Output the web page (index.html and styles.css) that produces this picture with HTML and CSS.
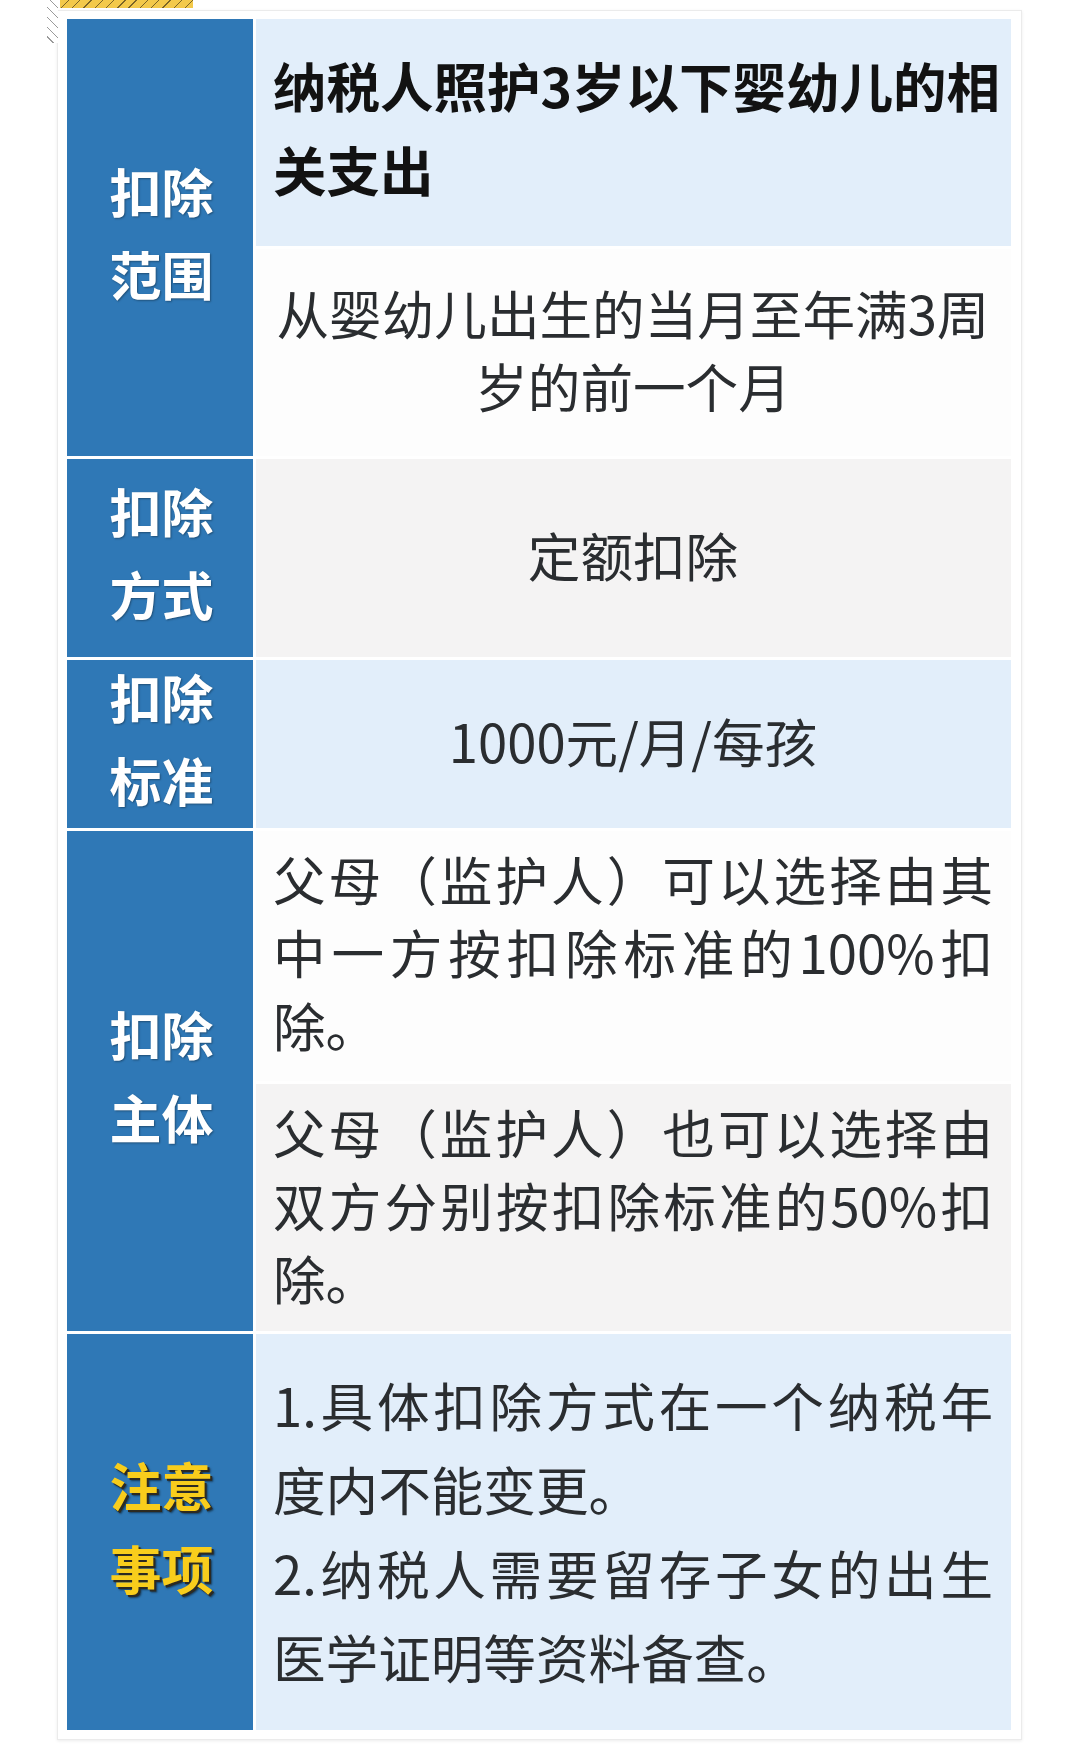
FILE: index.html
```html
<!DOCTYPE html>
<html lang="zh-CN">
<head>
<meta charset="utf-8">
<title>3岁以下婴幼儿照护专项附加扣除</title>
<link rel="stylesheet" href="styles.css">
</head>
<body>
<div class="page">
  <div class="deco-hatch"></div>
  <div class="deco-tape"></div>
  <div class="card">
    <div class="table">
      <div class="label"><span>扣除</span><span>范围</span></div>
      <div class="cell split">
        <div class="sub blue title">纳税人照护3岁以下婴幼儿的相关支出</div>
        <div class="sub white center-text">从婴幼儿出生的当月至年满3周岁的前一个月</div>
      </div>

      <div class="label"><span>扣除</span><span>方式</span></div>
      <div class="cell gray center-text">定额扣除</div>

      <div class="label"><span>扣除</span><span>标准</span></div>
      <div class="cell blue center-text">1000元/月/每孩</div>

      <div class="label"><span>扣除</span><span>主体</span></div>
      <div class="cell split subject">
        <div class="sub white justify">父母（监护人）可以选择由其中一方按扣除标准的100%扣除。</div>
        <div class="sub gray justify">父母（监护人）也可以选择由双方分别按扣除标准的50%扣除。</div>
      </div>

      <div class="label note"><span>注意</span><span>事项</span></div>
      <div class="cell blue justify tall">
        <p>1.具体扣除方式在一个纳税年度内不能变更。</p>
        <p>2.纳税人需要留存子女的出生医学证明等资料备查。</p>
      </div>
    </div>
  </div>
</div>
</body>
</html>
```

FILE: styles.css
```css
* { box-sizing: border-box; }

html, body {
  margin: 0;
  padding: 0;
  background: #ffffff;
}

body {
  font-family: "Noto Sans CJK SC", "Noto Sans", sans-serif;
  color: #2a2d30;
}

.page {
  position: relative;
  width: 1080px;
  height: 1758px;
  padding-top: 10px;
}

.deco-hatch {
  position: absolute;
  left: 47px;
  top: 0;
  width: 11px;
  height: 43px;
  background: repeating-linear-gradient(45deg, #ffffff 0 4px, #9a9a9a 4px 5px, #ffffff 5px 7px);
}

.deco-tape {
  position: absolute;
  left: 60px;
  top: 0;
  width: 133px;
  height: 8px;
  background:
    repeating-linear-gradient(-45deg, #f3c94a 0 5px, #7a6426 5px 6px, #f3c94a 6px 8px);
}

.card {
  margin-left: 57px;
  width: 965px;
  height: 1730px;
  background: #ffffff;
  border: 1px solid #ebebeb;
  box-shadow: 0 1px 3px rgba(0, 0, 0, 0.08);
  padding: 8px 10px 9px 9px;
}

.table {
  display: grid;
  grid-template-columns: 186px 1fr;
  grid-template-rows: 437px 198px 168px 500px 396px;
  column-gap: 3px;
  row-gap: 3px;
}

.label {
  background: #2f78b6;
  color: #ffffff;
  font-weight: 700;
  font-size: 52px;
  line-height: 83px;
  display: flex;
  flex-direction: column;
  align-items: center;
  justify-content: center;
  text-shadow: 1px 1px 2px rgba(0, 0, 0, 0.35);
  padding: 0 0 12px 3px;
}

.label.note {
  color: #f8cd1c;
  text-shadow: 2px 2px 0 #2c2a22, 3px 3px 2px rgba(0, 0, 0, 0.5);
}

.cell {
  font-size: 52.6px;
  line-height: 73px;
}

.split {
  display: flex;
  flex-direction: column;
  gap: 3px;
}

.sub {
  padding: 0 18px 0 17px;
}

.split > .sub:first-child { flex: 0 0 227px; }
.split > .sub:last-child { flex: 1 1 auto; }
.subject > .sub:first-child { flex: 0 0 250px; }

.blue { background: #e2eefa; }
.gray { background: #f4f3f3; }
.white { background: #fdfdfd; }

.title {
  display: flex;
  align-items: center;
  font-weight: 700;
  font-size: 53.5px;
  line-height: 84px;
  color: #121212;
  padding: 0 0 12px 17px;
}

.center-text {
  display: flex;
  align-items: center;
  justify-content: center;
  text-align: center;
  padding: 0 18px 8px 17px;
}

.justify {
  text-align: justify;
}

.sub.white.justify { padding-top: 11px; }
.sub.gray.justify { padding-top: 11px; }

.tall {
  padding: 28px 18px 0 17px;
  line-height: 84px;
}

.tall p {
  margin: 0;
}
```
